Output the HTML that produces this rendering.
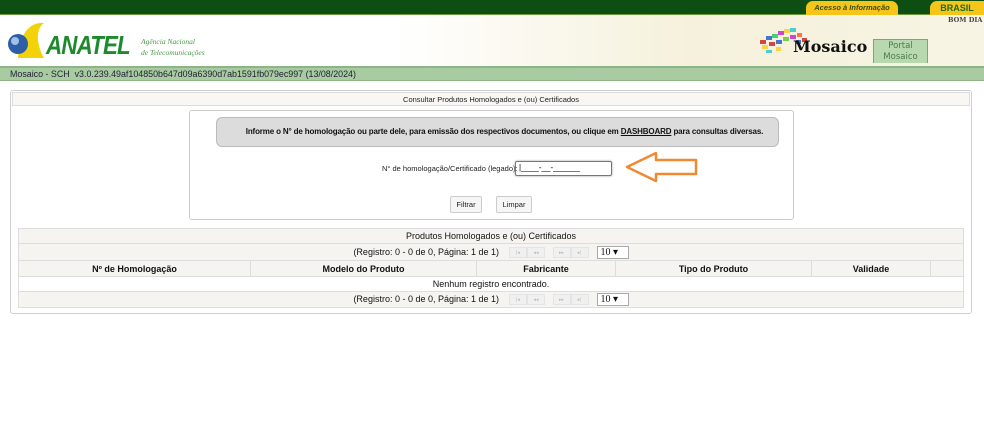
<!DOCTYPE html>
<html><head><meta charset="utf-8">
<style>
*{margin:0;padding:0;box-sizing:border-box}
body{width:984px;height:446px;background:#fff;font-family:"Liberation Sans",Arial,sans-serif;position:relative;overflow:hidden}
.abs{position:absolute;white-space:nowrap}
.top{left:0;top:0;width:984px;height:15px;background:#0d4f12;border-bottom:1px solid #6a9a3a}
.hdr{left:0;top:15px;width:984px;height:52px;background:linear-gradient(90deg,#fff 0%,#fff 40%,#f5f1dc 70%,#f7f4e4 100%)}
.ver{left:0;top:66px;width:984px;height:15px;background:#a8cba2;border-top:2px solid #8cb585;border-bottom:1px solid #8cb585;font-size:8.9px;color:#223;line-height:12px;padding-left:10px}
.panel{left:10px;top:90px;width:962px;height:224px;border:1px solid #cfcfcf;border-radius:3px}
.ttl{left:12px;top:92px;width:958px;height:14px;background:#f8f7f4;border:1px solid #ddd;font-size:7.5px;text-align:center;line-height:13px;color:#222}
.form{left:189px;top:110px;width:605px;height:110px;border:1px solid #ccc;border-radius:3px}
.msg{left:216px;top:117px;width:563px;height:30px;background:#dcdcdc;border:1px solid #bbb;border-radius:6px;font-size:8px;letter-spacing:-0.15px;font-weight:bold;text-align:center;line-height:28px;color:#111;padding-left:14px}
.btn{top:196px;height:17px;border:1px solid #ccc;border-radius:2px;background:#f6f6f6;font-size:7.5px;text-align:center;line-height:15px;color:#222}
table{position:absolute;left:18px;top:228px;width:946px;border-collapse:collapse;font-size:9px;color:#111}
td{border:1px solid #ddd;text-align:center;padding:0;white-space:nowrap}
.g{background:#f6f4f0}
.pg{display:inline-block;width:18px;height:11px;border:1px solid #e4e4e4;background:#f0f0f0;vertical-align:middle;font-size:5px;color:#bbb;line-height:10px}
.sel{display:inline-block;width:32px;height:13px;border:1px solid #aaa;font-family:"Liberation Serif",serif;font-size:10px;text-align:left;padding-left:3px;line-height:11px;vertical-align:middle;background:#fff;margin-left:8px}
</style></head><body>
<div class="abs top"></div>
<div class="abs" style="left:806px;top:1px;width:92px;height:14px;background:#f5c619;border-radius:7px 7px 0 0;font-size:7.5px;font-style:italic;font-weight:bold;color:#3a4a10;text-align:center;line-height:14px">Acesso à Informação</div>
<div class="abs" style="left:930px;top:1px;width:54px;height:14px;background:#f5c619;border-radius:7px 0 0 0;font-size:9px;font-weight:bold;color:#1d6a1a;text-align:center;line-height:14px">BRASIL</div>
<div class="abs hdr"></div>
<div class="abs" style="left:948px;top:16px;font-family:'DejaVu Serif',serif;font-size:6.5px;font-weight:bold;color:#444">BOM DIA</div>
<svg class="abs" style="left:4px;top:20px" width="80" height="42"><path d="M14 38 C16 10 28 2 40 3 C30 10 34 28 40 38 Z" fill="#f3d20a"/><circle cx="14" cy="24" r="10" fill="#2d5fa8"/><circle cx="11" cy="21" r="4" fill="#9ec0ea"/></svg>
<div class="abs" style="left:46px;top:30px;font-size:26px;font-weight:bold;font-style:italic;color:#1e8a2e;letter-spacing:-1px;transform:scaleX(0.86);transform-origin:left">ANATEL</div>
<div class="abs" style="left:141px;top:36px;font-family:'Liberation Serif',serif;font-style:italic;font-size:7.5px;color:#4a9a4a;line-height:11px">Agência Nacional<br>de Telecomunicações</div>
<svg class="abs" style="left:756px;top:20px" width="70" height="35"><g fill-opacity=".9"><rect x="4" y="20" width="6" height="4" fill="#c33"/><rect x="10" y="16" width="6" height="4" fill="#36c"/><rect x="16" y="14" width="6" height="4" fill="#3c6"/><rect x="22" y="11" width="6" height="4" fill="#c3c"/><rect x="28" y="9" width="6" height="4" fill="#fc3"/><rect x="34" y="8" width="6" height="4" fill="#3cc"/><rect x="6" y="25" width="6" height="4" fill="#fc3"/><rect x="13" y="22" width="6" height="4" fill="#c33"/><rect x="20" y="20" width="6" height="4" fill="#36c"/><rect x="27" y="17" width="6" height="4" fill="#6c3"/><rect x="34" y="15" width="6" height="4" fill="#c3c"/><rect x="41" y="13" width="5" height="4" fill="#f63"/><rect x="10" y="30" width="6" height="3" fill="#3cc"/><rect x="20" y="27" width="5" height="4" fill="#fc3"/><rect x="40" y="20" width="5" height="4" fill="#36c"/><rect x="46" y="18" width="5" height="4" fill="#c33"/></g></svg>
<div class="abs" style="left:793px;top:37px;font-family:'DejaVu Serif',serif;font-weight:bold;font-size:16px;color:#111">Mosaico</div>
<div class="abs" style="left:873px;top:39px;width:55px;height:24px;background:#b8d9b0;border:1px solid #7aa874;border-bottom:none;font-family:'DejaVu Sans',sans-serif;font-size:8.5px;color:#4c7a4c;text-align:center;line-height:11px;padding-top:1px">Portal<br>Mosaico</div>
<div class="abs ver">Mosaico - SCH&nbsp; v3.0.239.49af104850b647d09a6390d7ab1591fb079ec997 (13/08/2024)</div>
<div class="abs panel"></div>
<div class="abs ttl">Consultar Produtos Homologados e (ou) Certificados</div>
<div class="abs form"></div>
<div class="abs msg">Informe o N° de homologação ou parte dele, para emissão dos respectivos documentos, ou clique em <u>DASHBOARD</u> para consultas diversas.</div>
<div class="abs" style="left:382px;top:164px;font-size:7.5px;color:#222">N° de homologação/Certificado (legado):</div>
<div class="abs" style="left:515px;top:161px;width:97px;height:15px;border:1px solid #777;border-radius:2px;box-shadow:0 0 2px #999;font-size:8px;line-height:12px;padding-left:3px">|____-__-______</div>
<svg class="abs" style="left:624px;top:150px" width="76" height="34"><path d="M3 17 L32 3 L32 10 L72 10 L72 24 L32 24 L32 31 Z" fill="none" stroke="#f08a30" stroke-width="2.5" stroke-linejoin="round"/></svg>
<div class="abs btn" style="left:450px;width:32px">Filtrar</div>
<div class="abs btn" style="left:496px;width:36px">Limpar</div>
<table>
<tr style="height:15px" class="g"><td colspan="6">Produtos Homologados e (ou) Certificados</td></tr>
<tr style="height:17px" class="g"><td colspan="6">(Registro: 0 - 0 de 0, Página: 1 de 1) &nbsp;&nbsp;&nbsp;<span class="pg">|◂</span><span class="pg">◂◂</span>&nbsp;&nbsp;&nbsp;<span class="pg">▸▸</span><span class="pg">▸|</span><span class="sel">10 ▾</span></td></tr>
<tr style="height:16px" class="g"><td style="width:232px"><b>Nº de Homologação</b></td><td style="width:226px"><b>Modelo do Produto</b></td><td style="width:139px"><b>Fabricante</b></td><td style="width:196px"><b>Tipo do Produto</b></td><td style="width:119px"><b>Validade</b></td><td></td></tr>
<tr style="height:15px"><td colspan="6">Nenhum registro encontrado.</td></tr>
<tr style="height:16px" class="g"><td colspan="6">(Registro: 0 - 0 de 0, Página: 1 de 1) &nbsp;&nbsp;&nbsp;<span class="pg">|◂</span><span class="pg">◂◂</span>&nbsp;&nbsp;&nbsp;<span class="pg">▸▸</span><span class="pg">▸|</span><span class="sel">10 ▾</span></td></tr>
</table>
</body></html>
